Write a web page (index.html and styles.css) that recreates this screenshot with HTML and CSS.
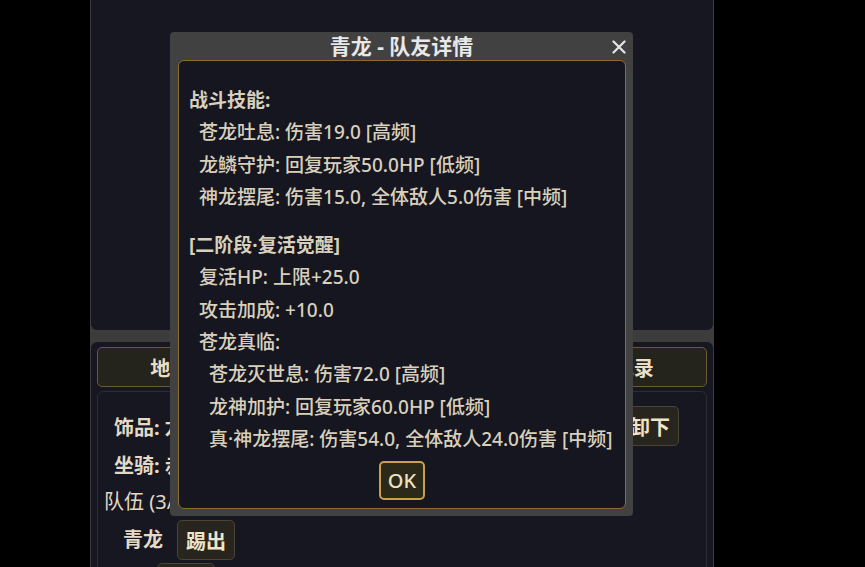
FILE: index.html
```html
<!doctype html>
<html>
  <head>
    <title>队友详情</title>
    <link rel="stylesheet" href="styles.css">
  </head>
  <body>
    <div class="app">
      <div class="top-panel"></div>
      <div class="bottom-panel">
        <div class="tabs">
          <button class="tab">地图</button>
          <button class="tab">背包</button>
          <button class="tab">队伍</button>
          <button class="tab">记录</button>
        </div>
        <div class="content">
          <div class="equip-row">
            <span class="label">饰品: 龙鳞护符</span>
            <button class="btn">卸下</button>
          </div>
          <div class="equip-row">
            <span class="label">坐骑: 赤焰马</span>
          </div>
          <div class="team-title">队伍 <span class="count">(3/4)</span></div>
          <div class="member">
            <span class="name">青龙</span>
            <button class="btn">踢出</button>
          </div>
          <div class="member">
            <span class="name">狐</span>
            <button class="btn">踢出</button>
          </div>
        </div>
      </div>
    </div>

    <div class="modal">
      <div class="modal-title">
        青龙 - 队友详情
        <svg class="close" width="14" height="14" viewBox="0 0 14 14">
          <path d="M1.5 1.5 L12.5 12.5 M12.5 1.5 L1.5 12.5" stroke="#e6e6e6" stroke-width="2.2" stroke-linecap="round"/>
        </svg>
      </div>
      <div class="modal-body">
        <div class="group">
          <div class="heading">战斗技能:</div>
          <div class="item">苍龙吐息: 伤害19.0 [高频]</div>
          <div class="item">龙鳞守护: 回复玩家50.0HP [低频]</div>
          <div class="item">神龙摆尾: 伤害15.0, 全体敌人5.0伤害 [中频]</div>
        </div>
        <div class="group">
          <div class="heading">[二阶段·复活觉醒]</div>
          <div class="item">复活HP: 上限+25.0</div>
          <div class="item">攻击加成: +10.0</div>
          <div class="item">苍龙真临:</div>
          <div class="sub-item">苍龙灭世息: 伤害72.0 [高频]</div>
          <div class="sub-item">龙神加护: 回复玩家60.0HP [低频]</div>
          <div class="sub-item">真·神龙摆尾: 伤害54.0, 全体敌人24.0伤害 [中频]</div>
        </div>
        <div class="actions">
          <button class="ok-button">OK</button>
        </div>
      </div>
    </div>
  </body>
</html>
```

FILE: styles.css
```css
body {
  margin: 0;
  background-color: #000;
  font-family: "Noto Sans", "Noto Sans CJK SC", sans-serif;
  color: #ddd4c0;
  overflow: hidden;
}
button {
  font-family: "Noto Sans", "Noto Sans CJK SC", sans-serif;
}

.app {
  width: 622px;
  height: 567px;
  margin-left: 90px;
  padding: 0 1px;
  background-color: #3c3c3c;
  overflow: hidden;
}
.top-panel {
  height: 330px;
  background-color: #171722;
  border-radius: 0 0 6px 6px;
}
.bottom-panel {
  margin-top: 12px;
  height: 300px;
  padding: 5px 6px;
  background-color: #171722;
  border-radius: 6px 6px 0 0;
}

.tabs {
  display: flex;
  gap: 8px;
}
.tab {
  flex: 1;
  height: 40px;
  background-color: #25241c;
  border: 1px solid #6a5a34;
  border-radius: 5px;
  color: #eadfc4;
  font-size: 20px;
  font-weight: bold;
}

.content {
  margin-top: 4px;
  height: 300px;
  padding: 15px 27px 0 6px;
  border: 1px solid #2b2b36;
  border-radius: 6px;
}
.equip-row {
  height: 38px;
  padding-left: 10px;
  display: flex;
  align-items: center;
  justify-content: space-between;
}
.label {
  font-size: 20px;
  font-weight: bold;
  color: #e3dac6;
}
.team-title {
  height: 37px;
  line-height: 37px;
  font-size: 20px;
  color: #e3dac6;
}
.count {
  font-weight: normal;
}
.member {
  height: 43px;
  padding-left: 19px;
  display: flex;
  align-items: flex-start;
  gap: 14px;
}
.name {
  line-height: 40px;
  font-size: 20px;
  font-weight: bold;
  color: #e3dac6;
}
.btn {
  width: 58px;
  height: 40px;
  padding: 0;
  background-color: #27251d;
  border: 1px solid #4b4433;
  border-radius: 5px;
  color: #efe4c8;
  font-size: 20px;
  font-weight: bold;
}

.modal {
  position: absolute;
  left: 170px;
  top: 32px;
  width: 463px;
  height: 484px;
  background-color: #414141;
  border-radius: 4px;
  display: flex;
  flex-direction: column;
}
.modal-title {
  position: relative;
  height: 28px;
  line-height: 28px;
  text-align: center;
  font-size: 21px;
  font-weight: bold;
  color: #e8e8e8;
}
.close {
  position: absolute;
  right: 7px;
  top: 8px;
}
.modal-body {
  flex: 1;
  margin: 0 7px 7px 8px;
  padding: 23px 10px 0;
  background-color: #161621;
  border: 1px solid #8c6d2e;
  border-radius: 6px;
  font-size: 19px;
  line-height: 32.3px;
  color: #d9d0bc;
  white-space: nowrap;
}
.group + .group {
  margin-top: 16px;
}
.heading {
  font-weight: bold;
}
.item {
  padding-left: 10px;
  font-weight: 500;
}
.sub-item {
  padding-left: 20px;
  font-weight: 500;
}
.actions {
  display: flex;
  justify-content: center;
  margin-top: 6px;
}
.ok-button {
  width: 46px;
  height: 39px;
  padding: 0;
  background-color: #2d2919;
  border: 2px solid #c9a04c;
  border-radius: 5px;
  color: #ebe2c2;
  font-size: 20px;
  font-weight: 500;
}
```
